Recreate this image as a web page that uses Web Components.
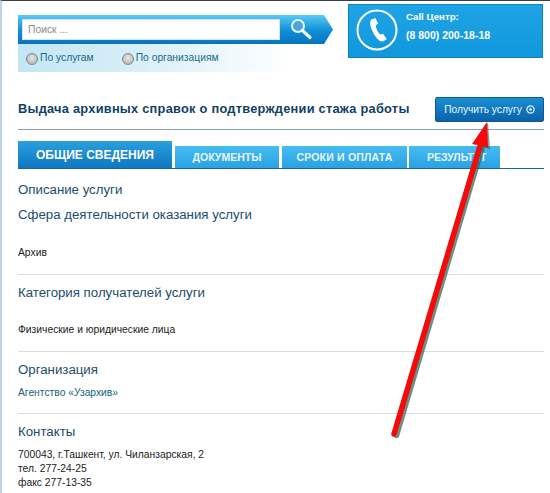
<!DOCTYPE html>
<html lang="ru"><head><meta charset="utf-8">
<style>
html,body{margin:0;padding:0;background:#fff}
body{width:550px;height:493px;overflow:hidden;font-family:"Liberation Sans",Arial,sans-serif}
</style></head><body>
<gov-page>
  <search-box slot="search"></search-box>
  <call-center slot="call"></call-center>
  <service-head slot="head"></service-head>
  <tab-bar slot="tabs"></tab-bar>
  <info-section plain heading="Описание услуги" style="height:25px"></info-section>
  <info-section heading="Сфера деятельности оказания услуги" style="height:78px;--gap:23px">
    <span>Архив</span></info-section>
  <info-section heading="Категория получателей услуги" style="height:77px;--gap:22px">
    <span>Физические и юридические лица</span></info-section>
  <info-section heading="Организация" style="height:62px;--gap:8px">
    <span style="color:#17607f">Агентство «Узархив»</span></info-section>
  <info-section plain heading="Контакты" style="--gap:8px">
    <span>700043, г.Ташкент, ул. Чиланзарская, 2<br>тел. 277-24-25<br>факс 277-13-35</span></info-section>
</gov-page>
<script>
function def(name,html){customElements.define(name,class extends HTMLElement{
  constructor(){super();this.attachShadow({mode:'open'}).innerHTML=html}
})}
def('gov-page',`<style>
:host{display:block;position:relative;width:550px;height:493px;overflow:hidden;box-sizing:border-box;border-top:1px solid #3c4044;border-left:2px solid #bdd3e6;padding-left:16px;background:#fff}
.top{display:flex;align-items:flex-start;height:95px}
.main{width:526px}
svg{position:absolute;left:-2px;top:-1px;pointer-events:none}
</style>
<div class="top"><slot name="search"></slot><slot name="call"></slot></div>
<slot name="head"></slot><slot name="tabs"></slot>
<div class="main"><slot></slot></div>
<svg width="550" height="493" viewBox="0 0 550 493">
<path d="M395 435L481 146" stroke="#2f5f56" stroke-width="5.500" stroke-linecap="round" fill="none" opacity=".7" transform="translate(1.500 .5)"/>
<path d="M394 434L480 146" stroke="#f50a0a" stroke-width="5.500" stroke-linecap="round" fill="none"/>
<path d="M487 122L489 149L480 145L472 144Z" fill="#2f5f56" opacity=".6" transform="translate(1 .5)"/>
<path d="M487 122L488 148L480 145L472 144Z" fill="#f50a0a"/>
</svg>`);
def('search-box',`<style>
:host{display:block;width:315px;margin-top:14px}
.bar{height:29px;box-sizing:border-box;background:linear-gradient(#4fc3f0,#0f8fd6 55%,#0a78c4);border-top:2px solid #55c8f2;border-bottom:2px solid #0a74bf;clip-path:polygon(0 0,306px 0,315px 50%,306px 100%,0 100%);display:flex;align-items:center;width:315px}
.in{margin-left:4px;width:258px;height:21px;box-sizing:border-box;background:#fff;border:1px solid #cfe5f2;font-size:10.300px;color:#8a8a8a;padding:0 0 0 5px;line-height:19px}
svg{margin-left:10px;flex:none}
.opts{height:28px;width:272px;background:linear-gradient(90deg,#c3e6f4,#d8eff8 45%,#fff);display:flex;align-items:flex-start;box-sizing:border-box;padding:7px 0 0 8px;font-size:10.300px;color:#1a6a8a}
label{display:flex;align-items:center;gap:2px;line-height:12px}
label+label{margin-left:28px}
i{width:12px;height:12px;border-radius:50%;box-sizing:border-box;border:1px solid #7c8c90;background:radial-gradient(circle at 50% 40%,#e8e8e8,#a9a9a9);display:block;margin-top:2px}
</style>
<div class="bar"><div class="in">Поиск ...</div>
<svg width="24" height="24" viewBox="0 0 24 24"><circle cx="8" cy="8" r="6" fill="#4aa5dc" stroke="#e9f6fc" stroke-width="2"/><path d="M12.500 12.500L20 19.500" stroke="#eefafd" stroke-width="3.200" stroke-linecap="round"/></svg></div>
<div class="opts"><label><i></i>По услугам</label><label><i></i>По организациям</label></div>`);
def('call-center',`<style>
:host{display:flex;box-sizing:border-box;width:195px;height:54px;margin:3px 0 0 15px;background:linear-gradient(#1fa5e6,#1097dc);border:1px solid #0d86c6;color:#fff;font-weight:bold;font-size:9.700px}
svg{margin:4px 0 0 7px;flex:none}
.t{margin:6px 0 0 8px;line-height:12px}
.n{margin-top:6px;font-size:10.500px;white-space:nowrap}
</style>
<svg width="42" height="42" viewBox="0 0 42 42"><circle cx="21" cy="21" r="19.500" fill="none" stroke="#fff" stroke-width="2"/>
<path d="M16 10.500l3.200-1.600 3 5.600-2.300 1.800c-.4 2.700 2.300 7.700 4.500 9.300l2.700-.9 3.600 5.200-2.700 2.100c-2.300 1.400-5.600-.3-8.700-4.800-3.500-5.100-5.900-11.900-4.900-14.900.3-1.100 1.100-1.400 1.600-2.800z" fill="#fff"/></svg>
<div class="t"><div>Call Центр:</div><div class="n">(8 800) 200-18-18</div></div>`);
def('service-head',`<style>
:host{display:flex;box-sizing:border-box;width:526px;height:34px;justify-content:space-between;align-items:flex-start;border-bottom:1px solid #8aa2b2;color:#123f66}
h1{margin:5px 0 0;font-size:12.800px;line-height:15px;font-weight:bold;white-space:nowrap;letter-spacing:.02em}
.b{margin-top:1px;width:109px;height:25px;box-sizing:border-box;background:linear-gradient(#1a8fd4,#0a62a8);border:1px solid #0d5a96;border-radius:2px;color:#e8f4fb;font-size:10.200px;display:flex;align-items:center;justify-content:center;gap:4px}
svg{flex:none}
</style><h1>Выдача архивных справок о подтверждении стажа работы</h1>
<div class="b">Получить услугу<svg width="9" height="9" viewBox="0 0 9 9"><circle cx="4.500" cy="4.500" r="3.600" fill="none" stroke="#e8f4fb" stroke-width="1.200"/><circle cx="4.500" cy="4.500" r="1.300" fill="#e8f4fb"/></svg></div>`);
def('tab-bar',`<style>
:host{display:flex;align-items:flex-end;width:526px;height:28px;margin-top:11px;margin-bottom:3px;box-sizing:border-box;border-bottom:1px solid #14689f;font-weight:bold;color:#fff}
div{display:flex;align-items:center;justify-content:center;box-sizing:border-box;white-space:nowrap}
.a{width:154px;height:27px;background:linear-gradient(#2a9fe0,#0e78c0);font-size:12px;margin-right:3px}
.t{height:22px;background:linear-gradient(#45bcf2,#2aa2e4);font-size:10.500px;color:#e8f6fc}
.r{justify-content:flex-start;padding-left:18px;overflow:hidden}
</style><div class="a">ОБЩИЕ СВЕДЕНИЯ</div><div class="t" style="width:104px;margin-right:3px">ДОКУМЕНТЫ</div><div class="t" style="width:125px;margin-right:2px;letter-spacing:.2px">СРОКИ И ОПЛАТА</div><div class="t r" style="width:91px">РЕЗУЛЬТАТ</div>`);
customElements.define('info-section',class extends HTMLElement{
  constructor(){super();this.attachShadow({mode:'open'}).innerHTML=`<style>
:host{display:block;box-sizing:border-box;border-bottom:1px solid #cfe0e6;--gap:10px}
:host([plain]){border-bottom:0}
h2{margin:0;font-size:13.250px;line-height:16px;font-weight:normal;color:#1a4c6c;padding-top:10px}
.c{margin-top:var(--gap);font-size:10.300px;line-height:14px;color:#222}
</style><h2></h2><div class="c"><slot></slot></div>`;}
  connectedCallback(){this.shadowRoot.querySelector('h2').textContent=this.getAttribute('heading')}
});
</script>
</body></html>
